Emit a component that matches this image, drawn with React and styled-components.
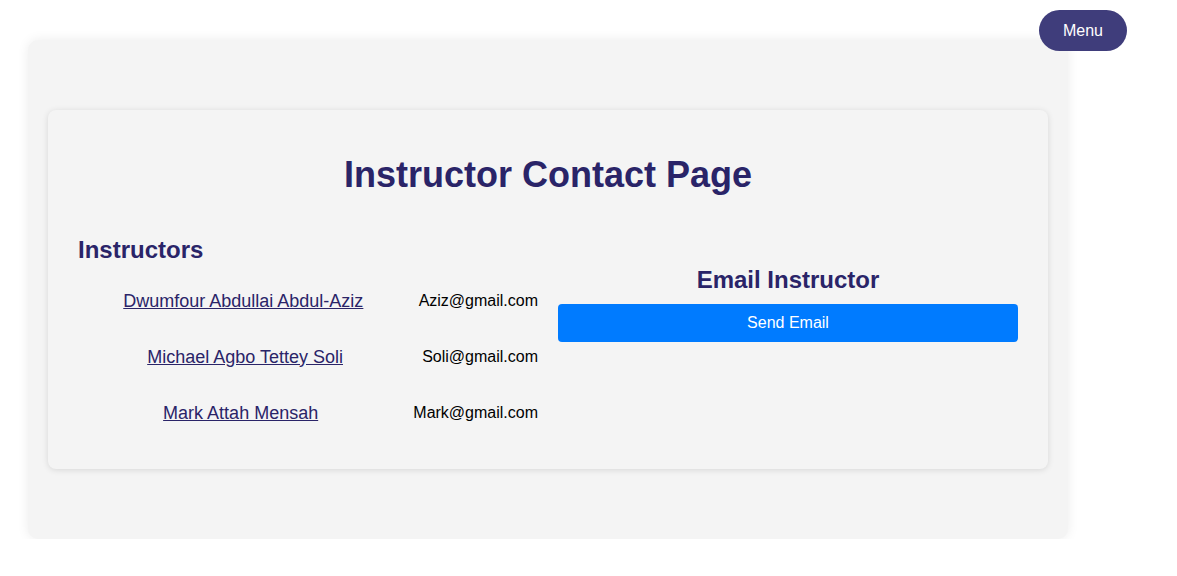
import React from 'react';
import styled, { createGlobalStyle } from 'styled-components';

const GlobalStyle = createGlobalStyle`
  body {
    margin: 8px;
    background: #ffffff;
    font-family: "Liberation Sans", Arial, sans-serif;
  }
`;

const MenuButton = styled.button`
  position: fixed;
  top: 10px;
  right: 50px;
  width: 88px;
  height: 41px;
  border: none;
  border-radius: 21px;
  background: #3f3d7b;
  color: #ffffff;
  font-family: "Liberation Sans", Arial, sans-serif;
  font-size: 16px;
  cursor: pointer;
  z-index: 10;
`;

const Panel = styled.main`
  width: 1040px;
  box-sizing: border-box;
  margin: 32px 0 0 20px;
  padding: 70px 20px;
  background: #f4f4f4;
  border-radius: 10px;
  box-shadow: 0 0 12px rgba(0, 0, 0, 0.08);
`;

const Card = styled.section`
  background: #f4f4f4;
  border-radius: 8px;
  padding: 20px 30px;
  box-shadow: 0 1px 6px rgba(0, 0, 0, 0.12);
`;

const Title = styled.h1`
  margin: 24px 0;
  text-align: center;
  font-size: 36px;
  font-weight: 700;
  color: #2a2468;
`;

const Columns = styled.div`
  display: grid;
  grid-template-columns: 1fr 1fr;
  gap: 20px;
  align-items: start;
`;

const Column = styled.div`
  padding-top: ${(p) => p.$top || 0}px;
  padding-bottom: 8px;
`;

const Heading = styled.h2`
  margin: ${(p) => (p.$center ? '0 0 10px' : '16px 0 9px')};
  font-size: 24px;
  font-weight: 700;
  color: #2a2468;
  text-align: ${(p) => (p.$center ? 'center' : 'left')};
`;

const Row = styled.div`
  display: flex;
  align-items: center;
  gap: 10px;
  height: 56px;
  font-size: 16px;
`;

const NameLink = styled.a`
  flex: 1;
  text-align: center;
  font-size: 18px;
  color: #2a2468;
  text-decoration: underline;
`;

const Email = styled.span`
  color: #000000;
`;

const SendButton = styled.button`
  display: block;
  width: 100%;
  height: 38px;
  border: none;
  border-radius: 4px;
  background: #007bff;
  color: #ffffff;
  font-family: "Liberation Sans", Arial, sans-serif;
  font-size: 16px;
  cursor: pointer;
`;

const instructors = [
  { name: 'Dwumfour Abdullai Abdul-Aziz', email: 'Aziz@gmail.com' },
  { name: 'Michael Agbo Tettey Soli', email: 'Soli@gmail.com' },
  { name: 'Mark Attah Mensah', email: 'Mark@gmail.com' },
];

export default function App() {
  return (
    <>
      <GlobalStyle />
      <MenuButton>Menu</MenuButton>
      <Panel>
        <Card>
          <Title>Instructor Contact Page</Title>
          <Columns>
            <Column>
              <Heading>Instructors</Heading>
              {instructors.map((i) => (
                <Row key={i.email}>
                  <NameLink href="#">{i.name}</NameLink>
                  <Email>{i.email}</Email>
                </Row>
              ))}
            </Column>
            <Column $top={46}>
              <Heading $center>Email Instructor</Heading>
              <SendButton>Send Email</SendButton>
            </Column>
          </Columns>
        </Card>
      </Panel>
    </>
  );
}
